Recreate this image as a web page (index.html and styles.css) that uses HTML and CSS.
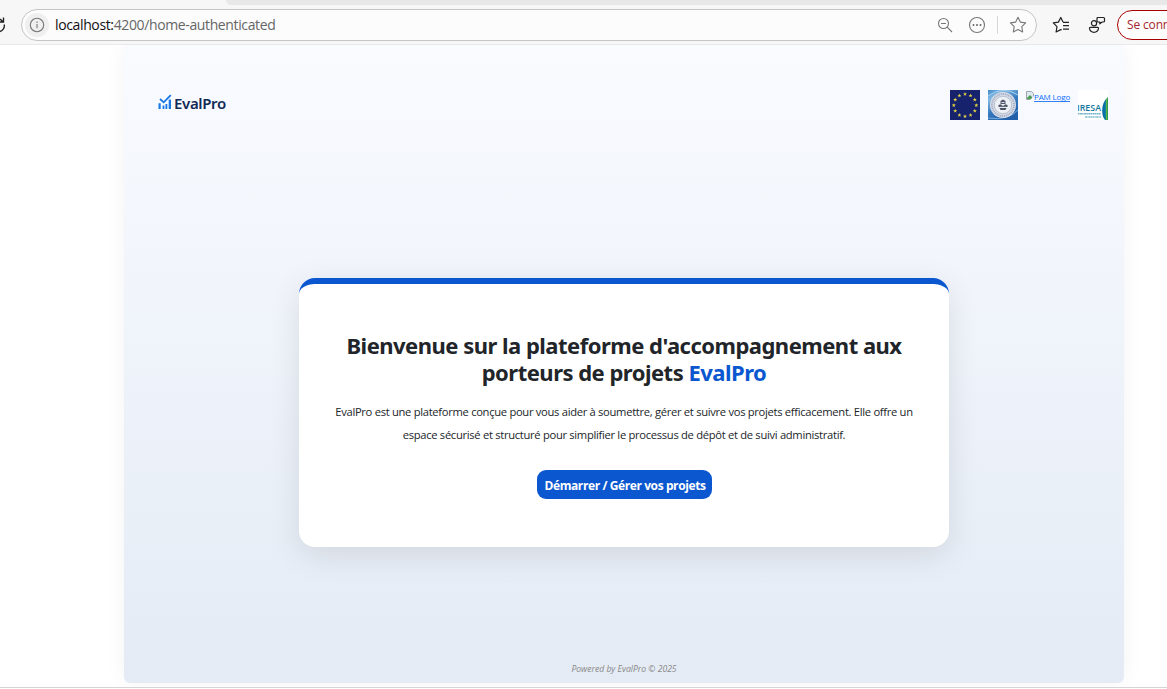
FILE: index.html
```html
<!DOCTYPE html>
<html lang="fr">
<head>
<meta charset="utf-8">
<title>EvalPro</title>
<link rel="stylesheet" href="styles.css">
</head>
<body>
<header class="browser">
  <div class="tabstrip"></div>
  <div class="toolbar">
    <svg class="reload" width="6" height="20" viewBox="0 0 6 20" fill="none" stroke="#222" stroke-width="1.4"><path d="M0 7H3.500V2.500M4.300 9.500Q4.800 14.500 0 16.500M0 4L3.300 7"/></svg>
    <div class="address">
      <span class="info"><svg width="16" height="16" viewBox="0 0 16 16" fill="none" stroke="#777" stroke-width="1.1"><circle cx="8" cy="8" r="6.7"/><path d="M8 7v4.2M8 4.6v1.3"/></svg></span>
      <span class="url"><b>localhost:</b>4200/home-authenticated</span>
      <span class="tools">
        <svg width="16" height="16" viewBox="0 0 16 16" fill="none" stroke="#777" stroke-width="1.1"><circle cx="6.5" cy="6.5" r="5"/><path d="M4 6.5h5M10.2 10.2L15 15"/></svg>
        <svg class="more" width="18" height="18" viewBox="0 0 18 18" fill="none" stroke="#777" stroke-width="1.1"><circle cx="9" cy="9" r="7.5"/><g fill="#666" stroke="none"><circle cx="5.5" cy="9" r="1"/><circle cx="9" cy="9" r="1"/><circle cx="12.5" cy="9" r="1"/></g></svg>
        <i class="divider"></i>
        <svg width="18" height="18" viewBox="0 0 18 18" fill="none" stroke="#777" stroke-width="1.1" stroke-linejoin="round"><path d="M9 1.3L11.3 6.1L16.6 6.9L12.8 10.6L13.7 16L9 13.5L4.3 16L5.2 10.6L1.4 6.9L6.7 6.1Z"/></svg>
      </span>
    </div>
    <svg class="favorites" width="18" height="18" viewBox="0 0 18 18" fill="none" stroke="#222" stroke-width="1.2" stroke-linejoin="round"><path d="M11 6.1L8.8 1.5L6.4 6.1L1.3 6.9L5 10.6L4.1 16L8.8 13.6L9.6 14.1M11 6.3H17M11 9.7H17M11 13.1H17"/></svg>
    <svg class="people" width="18" height="18" viewBox="0 0 18 18" fill="none" stroke="#222" stroke-width="1.2" stroke-linejoin="round"><circle cx="6" cy="7.2" r="2.6"/><path d="M2.5 11.3H9.5Q10.7 11.3 10.5 12.7Q9.8 16.3 6 16.3Q2.2 16.3 1.5 12.7Q1.3 11.3 2.5 11.3ZM10 1.5H15.5Q16.5 1.5 16.5 2.5V5Q16.5 6 15.5 6H14.2L11.8 7.8V6H10Q9 6 9 5V2.5Q9 1.5 10 1.5Z"/></svg>
    <span class="signin">Se connecter</span>
  </div>
</header>
<main class="viewport">
  <section class="page">
    <div class="brandbar">
      <div class="brand">
        <svg width="14" height="16" viewBox="0 0 14 16"><path fill="#1677e5" d="M.5 9.200h2.200V15H.5zM4.600 11.500h1.800V15H4.600zM7.500 10h1.800v5H7.500zM10.700 5.500H13V15h-2.300z"/><path d="M2 5L5.700 8.300L12.800 1.200" fill="none" stroke="#1677e5" stroke-width="1.800"/></svg>
        <span>EvalPro</span>
      </div>
      <div class="partners">
        <svg width="30" height="30" viewBox="0 0 30 30"><defs><path id="star" fill="#e3d344" d="M0-2L.55-.6L2-.6L.85.35L1.25 1.8L0 .95L-1.25 1.8L-.85.35L-2-.6L-.55-.6Z"/></defs><path fill="#17226d" d="M0 0h30v30H0z"/><use href="#star" x="15" y="4"/><use href="#star" x="20.6" y="5.5"/><use href="#star" x="24.8" y="9.6"/><use href="#star" x="26.3" y="15.2"/><use href="#star" x="24.8" y="20.8"/><use href="#star" x="20.6" y="25"/><use href="#star" x="15" y="26.3"/><use href="#star" x="9.4" y="25"/><use href="#star" x="5.2" y="20.8"/><use href="#star" x="3.8" y="15.2"/><use href="#star" x="5.2" y="9.6"/><use href="#star" x="9.4" y="5.5"/></svg>
        <svg width="30" height="30" viewBox="0 0 30 30"><defs><linearGradient id="sky" x2=".6" y2="1"><stop stop-color="#3f8ac8"/><stop offset=".25" stop-color="#83bae3"/><stop offset=".6" stop-color="#3478bd"/><stop offset="1" stop-color="#2460a9"/></linearGradient></defs><path fill="url(#sky)" d="M0 0h30v30H0z"/><path d="M0 6Q15-5 30 5" fill="none" stroke="#a8d0ee"/><path d="M0 28Q20 31 30 20" fill="none" stroke="#78addb"/><circle cx="15" cy="15" r="13" fill="#d7dce8"/><circle cx="15" cy="15" r="11" fill="none" stroke="#a5adc0" stroke-width="1.8" stroke-dasharray="1.1 .8"/><circle cx="15" cy="15" r="8.700" fill="#edf0f4" stroke="#9ba6b9" stroke-width=".6"/><path d="M12.500 11l2.500-1.500 2.500 1.500v3h-5zM10.500 15l2-.8L15 16l2.500-1.800 2 .8v2h-9zM11.500 18h7l-1 2h-5z" fill="#4b5365"/><path d="M13.500 12.500h3M12 17.300h6" stroke="#dce2eb"/></svg>
        <a class="missing"><svg width="8" height="9" viewBox="0 0 8 9"><path d="M.5.5h5l2 2v6h-7z" fill="#e0e9f2" stroke="#9ba6af"/><path d="M1 7l3-3 3 3v1H1z" fill="#4d9c52"/><path d="M4 9L8 5v4z" fill="#fff"/></svg><span>PAM Logo</span></a>
        <svg width="30" height="30" viewBox="0 0 30 30"><defs><linearGradient id="leaf" x2="1"><stop stop-color="#0767a4"/><stop offset=".55" stop-color="#087aa9"/><stop offset=".7" stop-color="#69b843"/><stop offset="1" stop-color="#188d56"/></linearGradient></defs><path fill="#fff" d="M0 0h30v30H0z"/><path fill="url(#leaf)" d="M30 7Q24 12 24.2 21Q24.3 27 27 30h3z"/><text class="iresa" x="-1" y="21" textLength="24" lengthAdjust="spacingAndGlyphs">IRESA</text><path d="M0 23.7h23" stroke="#74b5ca" stroke-width="1.6" stroke-dasharray="1.5 .4 2 .3"/><path d="M7 27h16" stroke="#82bdce" stroke-width="1.5" stroke-dasharray="2 .4 1 .3"/></svg>
      </div>
    </div>
    <article class="card">
      <h1><span class="line">Bienvenue sur la plateforme d'accompagnement aux</span><span class="line">porteurs de projets <em>EvalPro</em></span></h1>
      <p>EvalPro est une plateforme conçue pour vous aider à soumettre, gérer et suivre vos projets efficacement. Elle offre un<br>espace sécurisé et structuré pour simplifier le processus de dépôt et de suivi administratif.</p>
      <button>Démarrer / Gérer vos projets</button>
    </article>
    <footer>Powered by EvalPro © 2025</footer>
  </section>
</main>
</body>
</html>
```
FILE: styles.css
```css
* { box-sizing: border-box; }
body { margin: 0; width: 1167px; height: 689px; overflow: hidden; background: #fff; font-family: "Open Sans", "Noto Sans", sans-serif; color: #212529; }
svg { display: block; flex: none; }
.browser { height: 45px; background: #f7f7f7; border-bottom: 1px solid #e9e9e9; }
.tabstrip { height: 5px; margin-left: 226px; background: #e8e8e8; border-bottom-left-radius: 6px; }
.toolbar { height: 39px; display: flex; align-items: center; overflow: hidden; }
.reload { margin-right: 15px; }
.address { width: 1016px; height: 32px; margin-top: 1px; border: 1px solid #c5c5c5; border-radius: 16px; background: #fcfcfc; display: flex; align-items: center; flex: none; padding: 0 9px 0 3px; }
.info { width: 24px; height: 24px; display: grid; place-items: center; background: #efefef; border-radius: 50%; }
.url { margin-left: 6px; font-size: 14px; line-height: 20px; letter-spacing: -.37px; color: #666; white-space: nowrap; }
.url b { font-weight: 400; color: #111; }
.tools { margin-left: auto; display: flex; align-items: center; }
.more { margin-left: 15px; }
.divider { height: 18px; width: 1px; margin: 0 11px; background: #d7d7d7; }
.favorites { margin-left: 15px; }
.people { margin-left: 18px; }
.signin { width: 100px; height: 30px; flex: none; margin-left: 11px; padding-left: 9px; border: 1px solid #a80000; border-radius: 15px; background: #fdfdfd; color: #a4262c; font-size: 12px; line-height: 28px; letter-spacing: -.15px; }
.viewport { height: 643px; border-bottom: 1px solid #d5d4d7; overflow: hidden; display: flex; justify-content: center; padding-left: 81px; }
.page { width: 1000px; height: 638px; flex: none; border-radius: 0 0 6px 6px; background: linear-gradient(#f9fbff, #e4ebf5); box-shadow: 0 0 20px rgba(0,0,0,.05); display: flex; flex-direction: column; align-items: center; }
.brandbar { width: 100%; height: 233px; padding: 45px 16px 0 34px; display: flex; justify-content: space-between; align-items: flex-start; }
.brand { height: 26px; display: flex; align-items: center; gap: 2px; color: #102a56; font: 600 15px/20px "Noto Sans", sans-serif; letter-spacing: -.35px; }
.brand svg { margin-top: -2px; }
.partners { display: flex; gap: 8px; }
.missing { display: flex; width: 44px; height: 30px; color: #0d6efd; font-size: 8px; line-height: 14px; padding-top: 1px; }
.missing span { height: 11px; line-height: 12px; border-bottom: 1px solid #3580fa; letter-spacing: -.15px; white-space: nowrap; }
.iresa { font: 600 9px "Open Sans", sans-serif; fill: #16789d; }
.card { width: 650px; height: 269px; border-top: 6px solid #0b57d0; border-radius: 16px; background: #fff; box-shadow: 0 8px 32px rgba(0,0,0,.1); padding-top: 48px; text-align: center; white-space: nowrap; }
h1 { margin: 0; font: 700 22px/27px "Noto Sans", sans-serif; letter-spacing: -.51px; }
.line { display: block; }
h1 em { font-style: normal; color: #0b57d0; }
p { margin: 14px 0 0; font-size: 11.2px; line-height: 23px; letter-spacing: -.3px; }
button { display: block; width: 175px; height: 29px; margin: 24px auto 0; padding: 2px 0 0 2px; border: 0; border-radius: 9px; background: #0b57d0; color: #fff; font: 700 12px/20px "Open Sans", sans-serif; letter-spacing: -.4px; white-space: nowrap; }
footer { margin-top: 115px; font-size: 8.6px; line-height: 14px; font-style: italic; color: #888; white-space: nowrap; }
```
